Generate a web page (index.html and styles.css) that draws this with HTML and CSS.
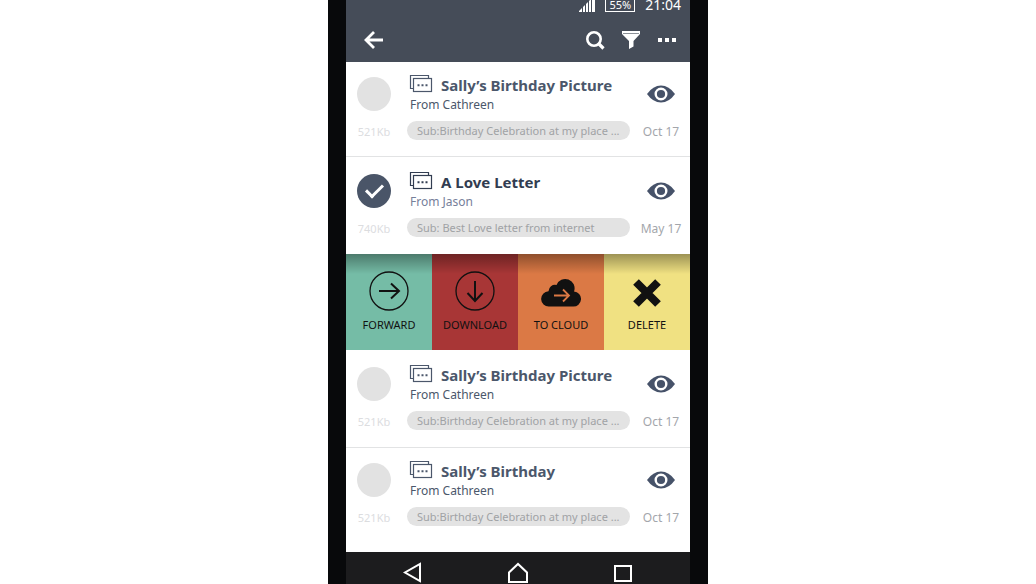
FILE: index.html
```html
<!DOCTYPE html>
<html lang="en">
<head>
  <meta charset="UTF-8" />
  <meta name="viewport" content="width=device-width, initial-scale=1.0" />
  <title>Messages</title>
  <link rel="stylesheet" href="styles.css">
</head>
<body>
  <!-- Shared icons -->
  <svg class="sprite" aria-hidden="true">
    <symbol id="chat" viewBox="0 0 24 20">
      <path d="M4.5 13.5H1.500V.500H19.500V3" fill="none" stroke="currentColor" stroke-width="1.2" />
      <rect x="4.500" y="3.500" width="18" height="13" fill="none" stroke="currentColor" stroke-width="1.2" />
      <path d="M8.500 9.300h2v2h-2zM12.500 9.300h2v2h-2zM16.500 9.300h2v2h-2z" fill="currentColor" />
    </symbol>
    <symbol id="eye" viewBox="0 0 28 18">
      <path d="M0 9Q6 .5 14 .5T28 9Q22 17.500 14 17.500T0 9Z" fill="currentColor" />
      <circle cx="14" cy="9" r="5.300" fill="none" stroke="#fff" stroke-width="2.400" />
    </symbol>
  </svg>

  <div class="phone">
    <div class="screen">
      <header class="header">
        <div class="status">
          <svg class="signal" viewBox="0 0 16 16" aria-hidden="true">
            <path d="M0 16V15l3-3v4zM4 16v-5l2-2v7zM7 16V8l2-2v10zM10 16V5l2-2v13zM13 16V2l3-2v16z" fill="#fff" />
          </svg>
          <span class="battery">55%</span>
          <span class="clock">21:04</span>
        </div>
        <div class="toolbar">
          <button class="tool back" aria-label="Back">
            <svg width="20" height="20" viewBox="0 0 20 20"><path d="M10 2 2 10l8 8M2 10h17" fill="none" stroke="#fff" stroke-width="2.800" /></svg>
          </button>
          <button class="tool" aria-label="Search">
            <svg width="20" height="20" viewBox="0 0 20 20"><circle cx="9" cy="9" r="6.700" fill="none" stroke="#fff" stroke-width="2.600" /><path d="m13.500 13.500 5 5" stroke="#fff" stroke-width="3.200" /></svg>
          </button>
          <button class="tool" aria-label="Filter">
            <svg width="20" height="20" viewBox="0 0 20 20"><path d="M1 1h18v3l-6.500 7v5.500L8 19v-8L1 4z" fill="#fff" /><path d="M2 3.500h16" stroke="#8b9097" stroke-width="1" /></svg>
          </button>
          <button class="tool" aria-label="More">
            <svg width="20" height="20" viewBox="0 0 20 20"><path d="M1 8h4v4H1zM8 8h4v4H8zM15 8h4v4h-4z" fill="#fff" /></svg>
          </button>
        </div>
      </header>

      <main class="list">
        <article class="mail">
          <div class="side">
            <input class="check" type="checkbox" id="mail1" aria-label="Select Sally’s Birthday Picture">
            <label class="size" for="mail1">521Kb</label>
          </div>
          <div class="info">
            <h2 class="title"><svg class="chat"><use href="#chat" /></svg>Sally’s Birthday Picture</h2>
            <p class="from">From Cathreen</p>
            <p class="subject">Sub:Birthday Celebration at my place ...</p>
          </div>
          <div class="meta">
            <button class="view" aria-label="View"><svg class="eye"><use href="#eye" /></svg></button>
            <time class="date">Oct 17</time>
          </div>
        </article>

        <article class="mail selected">
          <div class="side">
            <input class="check" type="checkbox" id="mail2" aria-label="Select A Love Letter" checked>
            <label class="size" for="mail2">740Kb</label>
          </div>
          <div class="info">
            <h2 class="title"><svg class="chat"><use href="#chat" /></svg>A Love Letter</h2>
            <p class="from">From Jason</p>
            <p class="subject">Sub: Best Love letter from internet</p>
          </div>
          <div class="meta">
            <button class="view" aria-label="View"><svg class="eye"><use href="#eye" /></svg></button>
            <time class="date">May 17</time>
          </div>
        </article>

        <div class="actions">
          <button class="action forward">
            <svg class="action-icon" viewBox="0 0 40 40"><circle cx="20" cy="20" r="19" fill="none" stroke="currentColor" stroke-width="1.300" /><path d="M10 20h19M22 12.500l8 7.500-8 7.500" fill="none" stroke="currentColor" stroke-width="2" /></svg>
            Forward
          </button>
          <button class="action download">
            <svg class="action-icon" viewBox="0 0 40 40"><circle cx="20" cy="20" r="19" fill="none" stroke="currentColor" stroke-width="1.300" /><path d="M20 10v19M12.500 22l7.500 8 7.500-8" fill="none" stroke="currentColor" stroke-width="2" /></svg>
            Download
          </button>
          <button class="action cloud">
            <svg class="action-icon" viewBox="0 0 40 40"><path d="M8 35.500a7.600 7.600 0 0 1-.500-15.200A6.500 6.500 0 0 1 15.500 14a9.300 9.300 0 0 1 17.500 6.500A7.500 7.500 0 0 1 32 35.500z" fill="currentColor" /><path d="M13 24.500h14M22 18.500l6 6-6 6" fill="none" stroke="#db7945" stroke-width="1.800" /></svg>
            To cloud
          </button>
          <button class="action delete">
            <svg class="action-icon" viewBox="0 0 40 40"><path d="m9 11 22 22M31 11l-22 22" stroke="currentColor" stroke-width="8" /></svg>
            Delete
          </button>
        </div>

        <article class="mail roomy">
          <div class="side">
            <input class="check" type="checkbox" id="mail3" aria-label="Select Sally’s Birthday Picture">
            <label class="size" for="mail3">521Kb</label>
          </div>
          <div class="info">
            <h2 class="title"><svg class="chat"><use href="#chat" /></svg>Sally’s Birthday Picture</h2>
            <p class="from">From Cathreen</p>
            <p class="subject">Sub:Birthday Celebration at my place ...</p>
          </div>
          <div class="meta">
            <button class="view" aria-label="View"><svg class="eye"><use href="#eye" /></svg></button>
            <time class="date">Oct 17</time>
          </div>
        </article>

        <article class="mail">
          <div class="side">
            <input class="check" type="checkbox" id="mail4" aria-label="Select Sally’s Birthday">
            <label class="size" for="mail4">521Kb</label>
          </div>
          <div class="info">
            <h2 class="title"><svg class="chat"><use href="#chat" /></svg>Sally’s Birthday</h2>
            <p class="from">From Cathreen</p>
            <p class="subject">Sub:Birthday Celebration at my place ...</p>
          </div>
          <div class="meta">
            <button class="view" aria-label="View"><svg class="eye"><use href="#eye" /></svg></button>
            <time class="date">Oct 17</time>
          </div>
        </article>
      </main>

      <nav class="nav">
        <button class="tool" aria-label="Back">
          <svg width="22" height="22" viewBox="0 0 22 22"><path d="M18 2v17L3 10.500z" fill="none" stroke="#fff" stroke-width="2" /></svg>
        </button>
        <button class="tool" aria-label="Home">
          <svg width="22" height="22" viewBox="0 0 22 22"><path d="M2 20V10.500L11 2l9 8.500V20z" fill="none" stroke="#fff" stroke-width="2" /></svg>
        </button>
        <button class="tool" aria-label="Recent apps">
          <svg width="22" height="22" viewBox="0 0 22 22"><path d="M3 4h16v15H3z" fill="none" stroke="#fff" stroke-width="2" /></svg>
        </button>
      </nav>
    </div>
  </div>
</body>
</html>
```
FILE: styles.css
```css
* {
  box-sizing: border-box;
}

body {
  display: flex;
  justify-content: center;
  min-height: 100vh;
  margin: 0;
  background: #fff;
  font-family: "Noto Sans", "Open Sans", sans-serif;
  color: #4b576b;
}

button {
  margin: 0;
  padding: 0;
  border: 0;
  background: none;
  font: inherit;
  cursor: pointer;
}

svg {
  display: block;
}

.sprite {
  position: absolute;
  width: 0;
  height: 0;
}

.phone {
  display: flex;
  width: 100%;
  max-width: 380px;
  padding: 0 18px;
  background: #08090b;
}

.screen {
  flex: 1;
  display: flex;
  flex-direction: column;
  background: #fff;
}

/* Header */
.header {
  background: #454c58;
  color: #fff;
}

.status {
  display: flex;
  justify-content: flex-end;
  align-items: flex-end;
  gap: 10px;
  height: 12px;
  padding-right: 9px;
}

.signal {
  width: 16px;
  height: 16px;
}

.battery {
  padding: 0 3px 2px;
  border: 1px solid #fff;
  border-top: 0;
  font-size: 11px;
  line-height: 9px;
}

.clock {
  padding-bottom: 2px;
  font-size: 14px;
  line-height: 10px;
}

.toolbar {
  display: flex;
  align-items: center;
  gap: 16px;
  height: 50px;
  padding: 6px 13px 0 18px;
}

.back {
  margin-right: auto;
}

/* Mail rows */
.list {
  flex: 1;
}

.mail {
  display: grid;
  grid-template-columns: 56px 1fr 58px;
  padding: 13px 0 14px;
  border-bottom: 1px solid #e2e3e4;
}

.mail:last-child {
  border-bottom: 0;
}

.selected,
.roomy {
  padding: 15px 0;
}

.side,
.meta {
  display: flex;
  flex-direction: column;
  align-items: center;
  gap: 11px;
}

.check {
  display: grid;
  place-items: center;
  appearance: none;
  width: 34px;
  height: 34px;
  margin: 2px 0 0;
  border-radius: 50%;
  background: #e2e2e2;
}

.check:checked {
  background: #4a5568;
}

.check:checked::after {
  content: "";
  width: 14px;
  height: 7px;
  margin-bottom: 4px;
  border-left: 3px solid #fff;
  border-bottom: 3px solid #fff;
  transform: rotate(-45deg);
}

.size {
  font-size: 11px;
  line-height: 20px;
  color: #dcdddf;
}

.info {
  padding: 0 2px 0 5px;
}

.title,
.from,
.subject {
  margin: 0;
}

.title {
  display: flex;
  align-items: center;
  gap: 8px;
  padding-left: 2px;
  font-size: 15px;
  line-height: 20px;
}

.chat {
  width: 24px;
  height: 20px;
}

.from {
  padding-left: 3px;
  font-size: 12px;
  line-height: 20px;
}

.selected .title {
  color: #323d51;
}

.selected .from {
  color: #76809a;
}

.subject {
  margin-top: 6px;
  padding: 0 10px;
  border-radius: 10px;
  background: #e3e3e3;
  font-size: 11px;
  line-height: 19px;
  color: #a0a2a5;
  white-space: nowrap;
}

.view {
  height: 34px;
  margin-top: 2px;
  color: #465269;
}

.eye {
  width: 28px;
  height: 18px;
}

.date {
  font-size: 12px;
  line-height: 20px;
  color: #a3a6ab;
}

/* Actions of the selected mail */
.selected {
  border-bottom: 0;
}

.actions {
  display: grid;
  grid-template-columns: repeat(4, 1fr);
}

.action {
  display: flex;
  flex-direction: column;
  align-items: center;
  gap: 8px;
  padding: 17px 0 19px;
  background-image: linear-gradient(rgba(0, 0, 0, 0.35), transparent 20px);
  font-size: 11px;
  line-height: 12px;
  text-transform: uppercase;
  color: #111;
}

.action-icon {
  width: 40px;
  height: 40px;
}

.forward { background-color: #75bca6; }
.download { background-color: #a83636; }
.cloud { background-color: #db7945; }
.delete { background-color: #f0e182; }

/* Bottom bar */
.nav {
  display: flex;
  justify-content: space-between;
  padding: 10px 56px 0;
  background: #1c1c1e;
}
```
